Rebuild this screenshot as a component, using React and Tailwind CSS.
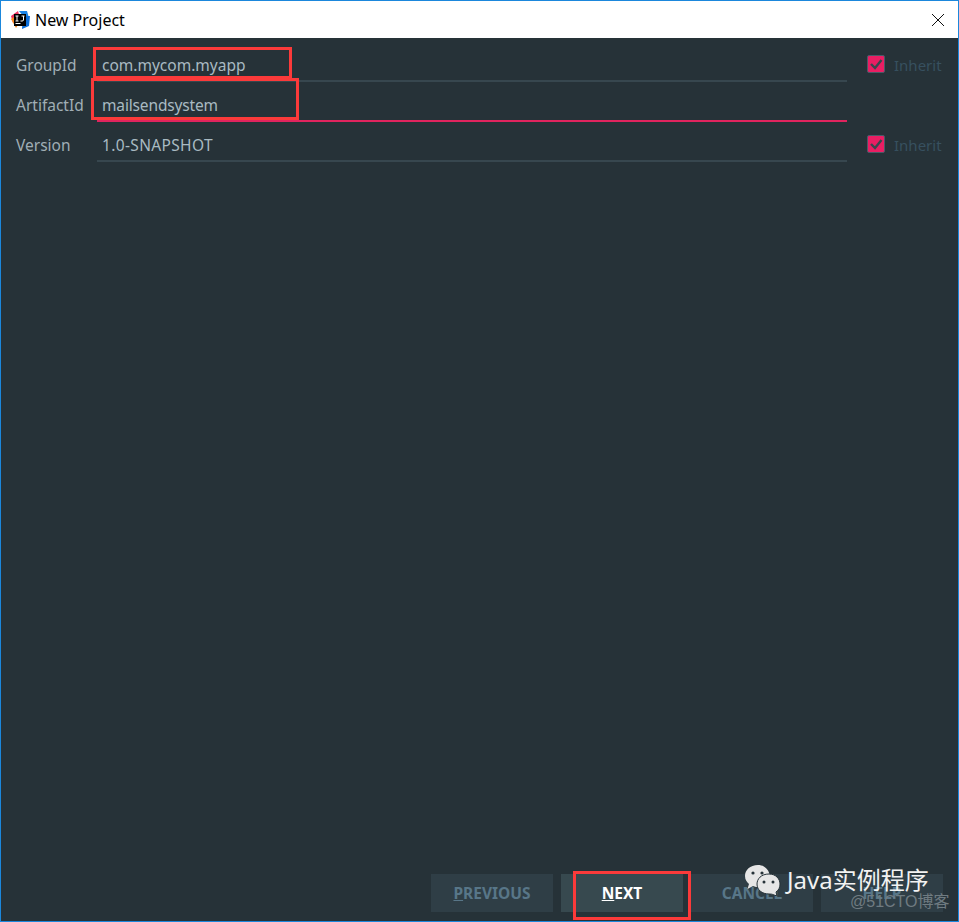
import React from 'react';

const font = { fontFamily: '"Noto Sans", "Noto Sans CJK SC", sans-serif' };

function Logo() {
    return (
        <svg width="20" height="20" viewBox="0 0 20 20" className="shrink-0">
            <path d="M1 6 L8 1 L10 8 L3 13 Z" fill="#f0325f" />
            <path d="M1 9 L6 18 L10 12 L4 7 Z" fill="#f98a1e" />
            <path d="M9 1 L17 1 L19 8 L14 7 Z" fill="#1a84e8" />
            <path d="M13 6 L20 6 L19 16 L12 19 Z" fill="#0f6fd8" />
            <rect x="4" y="4" width="12" height="12" fill="#000" />
            <rect x="5.5" y="13" width="5" height="1" fill="#fff" />
            <path d="M5.5 6 H8.5 M7 6 V11 M5.5 11 H8.5 M13.5 6 V10 Q13.5 11 12 11 H10.5 M11.5 6 H14.5" stroke="#fff" strokeWidth="1" fill="none" />
        </svg>
    );
}

function Row({ label, value, valueClass = '', active, inherit, box }) {
    return (
        <div className="flex h-10 items-end">
            <span className="flex h-8 w-[96px] shrink-0 items-center pl-[15px] text-[15.5px] text-[#a0aeb5]">{label}</span>
            <div className={`relative flex h-8 w-[750px] shrink-0 items-center border-b-2 pl-[5px] pt-[2px] text-[15.5px] text-[#a9bac2] ${active ? 'border-[#e0245e]' : 'border-[#37474f]'}`}>
                <span className={valueClass}>{value}</span>
                {box}
            </div>
            {inherit && (
                <div className="ml-5 flex h-8 items-center gap-[9px] pb-[2px]">
                    <div className="mb-[2px] flex h-[18px] w-[18px] items-center justify-center rounded-[2px] border border-[#4a5a68] bg-[#e91e63]">
                        <svg width="14" height="14" viewBox="0 0 14 14">
                            <path d="M2 7 L6 11 L12.5 3" stroke="#37474f" strokeWidth="2.4" fill="none" />
                        </svg>
                    </div>
                    <span className="text-[15px] text-[#37505f]">Inherit</span>
                </div>
            )}
        </div>
    );
}

function Btn({ children, primary, box }) {
    return (
        <div className={`relative flex h-[38px] w-[122px] items-center justify-center pt-[2px] text-[15.5px] font-bold ${primary ? 'bg-[#37494f] text-white' : 'bg-[#2f3e46] text-[#587688]'}`}>
            <span>{children}</span>
            {box}
        </div>
    );
}

export default function App() {
    return (
        <div className="relative flex h-[922px] w-[959px] flex-col overflow-hidden border border-[#1b87dc] bg-[#263238]" style={font}>
            {/* Title bar */}
            <div className="flex h-[37px] shrink-0 items-center bg-white pl-[9px] pr-[13px] text-[16px] text-black">
                <Logo />
                <span className="ml-[5px]">New Project</span>
                <svg width="14" height="14" viewBox="0 0 14 14" className="ml-auto">
                    <path d="M1 1 L13 13 M13 1 L1 13" stroke="#111" strokeWidth="1" />
                </svg>
            </div>

            {/* Form */}
            <div className="flex flex-1 flex-col pt-[4px]">
                <Row
                    label="GroupId"
                    value="com.mycom.myapp"
                    inherit
                    box={<div className="absolute left-[-4px] top-[-3px] h-[32px] w-[199px] border-[3px] border-[#fb3a3a]" />}
                />
                <Row
                    label="ArtifactId"
                    value="mailsendsystem"
                    valueClass="tracking-[-0.15px]"
                    active
                    box={<div className="absolute left-[-6px] top-[-12px] h-[42px] w-[208px] border-[3px] border-[#fb3a3a]" />}
                />
                <Row label="Version" value="1.0-SNAPSHOT" valueClass="tracking-[0.35px]" inherit />

                {/* Buttons */}
                <div className="mt-auto mb-[9px] ml-[430px] flex gap-2">
                    <Btn><span className="underline">P</span>REVIOUS</Btn>
                    <Btn primary box={<div className="absolute left-[12px] top-[-3px] h-[49px] w-[118px] border-[3px] border-[#fb3a3a]" />}>
                        <span className="underline">N</span>EXT
                    </Btn>
                    <Btn>CANCEL</Btn>
                    <Btn>HELP</Btn>
                </div>
            </div>

            {/* Watermark */}
            <div className="absolute left-[743px] top-[863px] flex items-center">
                <svg width="37" height="32" viewBox="0 0 37 32">
                    <path d="M14 1 C6 1 1 6 1 12 C1 16 3 18 5 20 L3.5 25 L9 22 C11 23 13 23 15 23 C25 23 27 17 26 12 C25 5 20 1 14 1 Z" fill="#e6e6e6" />
                    <circle cx="9" cy="9" r="1.6" fill="#263238" />
                    <circle cx="18" cy="9" r="1.6" fill="#263238" />
                    <path d="M25 10 C17 10 13 15 13 20 C13 26 18 30 25 30 C27 30 28 30 30 31 L33 32 L32 28 C35 26 36 23 36 20 C36 15 32 10 25 10 Z" fill="#e6e6e6" stroke="#263238" strokeWidth="1" />
                    <circle cx="20" cy="18" r="1.5" fill="#263238" />
                    <circle cx="29" cy="18" r="1.5" fill="#263238" />
                </svg>
                <span className="ml-[6px] text-[24px] leading-none text-[#f2f2f2]">Java实例程序</span>
            </div>
            <span className="absolute left-[849px] top-[893px] font-['Liberation_Sans','Noto_Sans_CJK_SC',sans-serif] text-[16px] leading-none text-[#6f7b81]">@51CTO博客</span>
        </div>
    );
}
